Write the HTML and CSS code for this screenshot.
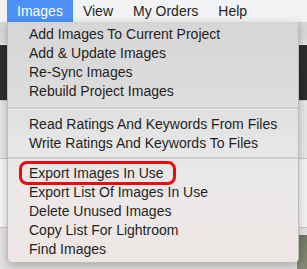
FILE: index.html
```html
<!DOCTYPE html>
<html>
<head>
<meta charset="utf-8">
<link rel="stylesheet" href="styles.css">
</head>
<body>
<div class="screen">
  <div class="menubar">
    <span class="mb-item active">Images</span>
    <span class="mb-item">View</span>
    <span class="mb-item">My Orders</span>
    <span class="mb-item">Help</span>
  </div>
  <div class="backdrop">
    <div class="band toolbar"></div>
    <div class="band dark"></div>
    <div class="band light"></div>
    <div class="band panel"></div>
    <div class="band bottom"><div class="photo"></div></div>
  </div>
  <div class="menu">
    <div class="item">Add Images To Current Project</div>
    <div class="item">Add &amp; Update Images</div>
    <div class="item">Re-Sync Images</div>
    <div class="item">Rebuild Project Images</div>
    <div class="sep sep-a"></div>
    <div class="item">Read Ratings And Keywords From Files</div>
    <div class="item">Write Ratings And Keywords To Files</div>
    <div class="sep sep-b"></div>
    <div class="item">Export Images In Use<span class="ring"></span></div>
    <div class="item">Export List Of Images In Use</div>
    <div class="item">Delete Unused Images</div>
    <div class="item">Copy List For Lightroom</div>
    <div class="item">Find Images</div>
  </div>
</div>
</body>
</html>
```
FILE: styles.css
```css
* { box-sizing: border-box; }
html, body { margin: 0; padding: 0; }
body {
  width: 307px;
  height: 269px;
  overflow: hidden;
  font-family: "Liberation Sans", Arial, sans-serif;
  background: #e4e4e4;
}
.screen {
  position: relative;
  width: 307px;
  height: 269px;
  overflow: hidden;
}
.menubar {
  display: flex;
  height: 22px;
  padding-left: 7px;
  background: #f0f2f4;
  font-size: 14px;
  color: #1e1e1e;
}
.mb-item {
  display: flex;
  align-items: center;
  padding: 0 10px;
  height: 22px;
}
.mb-item.active {
  background: #4a90f5;
  color: #fff;
}
.backdrop {
  display: flex;
  flex-direction: column;
}
.band.toolbar {
  height: 23px;
  background: linear-gradient(#d4d4d4, #dedede);
  border-bottom: 1px solid #ececec;
}
.band.dark {
  height: 55px;
  background: #2d2d2d;
}
.band.light {
  height: 58px;
  background: #e6e6e6;
  border-top: 1px solid #c9c9c9;
}
.band.panel {
  height: 70px;
  background: #f4f4f4;
  border-top: 1px solid #c6c6c6;
  border-bottom: 1px solid #c6c6c6;
}
.band.bottom {
  flex: 1;
  display: flex;
  justify-content: flex-end;
  padding-top: 7px;
  background: #e2e2e2;
}
.photo {
  width: 10px;
  height: 40px;
  background: linear-gradient(#6f7660, #8a8f78);
}
.menu {
  position: absolute;
  left: 7px;
  top: 22px;
  width: 292px;
  height: 241px;
  padding-top: 3px;
  background: linear-gradient(#d6d6d6 0%, #dcdcdc 30%, #e6e6e6 50%, #ece9e8 75%, #ede6e4 100%);
  border: 1px solid #bdbdbd;
  border-top: none;
  border-radius: 0 0 5px 5px;
  box-shadow: 0 3px 8px rgba(0,0,0,0.25);
  font-size: 14px;
  color: #1f1f1f;
}
.item {
  position: relative;
  height: 19px;
  line-height: 19px;
  padding-left: 21px;
  white-space: nowrap;
}
.sep {
  display: flex;
  align-items: center;
}
.sep-a { height: 14px; }
.sep-b { height: 11px; }
.sep::before {
  content: "";
  flex: 1;
  height: 2px;
  background: #cecece;
  border-bottom: 1px solid #eaeaea;
}
.ring {
  position: absolute;
  left: 11px;
  top: -3px;
  width: 157px;
  height: 24px;
  border: 3px solid #ea0b10;
  border-radius: 8px;
}
```
